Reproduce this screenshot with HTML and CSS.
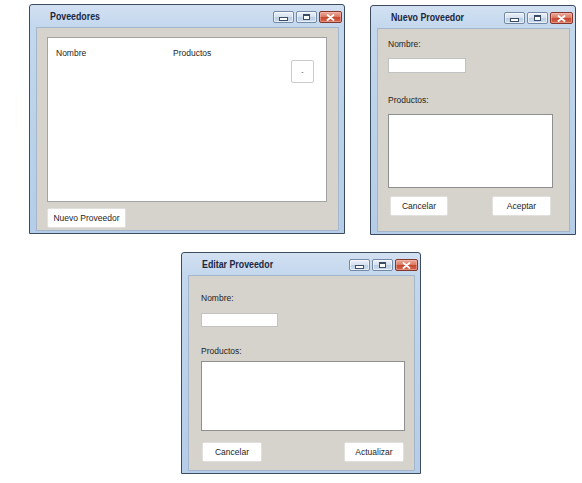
FILE: index.html
```html
<!DOCTYPE html>
<html lang="es">
<head>
<meta charset="utf-8">
<title>Proveedores</title>
<link rel="stylesheet" href="styles.css">
</head>
<body>
<div class="desk">

  <div class="win win-list">
    <div class="titlebar">
      <span class="title">Poveedores</span>
      <div class="tbtns">
        <span class="tb tb-min"><i class="ico-min"></i></span>
        <span class="tb tb-max"><i class="ico-max"></i></span>
        <span class="tb tb-close"><svg width="9" height="7" viewBox="0 0 9 7"><path d="M1.5 1 L7.5 6 M7.5 1 L1.5 6" stroke="#fff" stroke-width="1.8" stroke-linecap="round"/></svg></span>
      </div>
    </div>
    <div class="client client-list">
      <div class="panel">
        <div class="panel-head">
          <span class="col-name">Nombre</span>
          <span class="col-prod">Productos</span>
        </div>
        <div class="panel-row">
          <span class="btn btn-sq">-</span>
        </div>
      </div>
      <span class="btn btn-new">Nuevo Proveedor</span>
    </div>
  </div>

  <div class="win win-new">
    <div class="titlebar">
      <span class="title">Nuevo Proveedor</span>
      <div class="tbtns">
        <span class="tb tb-min"><i class="ico-min"></i></span>
        <span class="tb tb-max"><i class="ico-max"></i></span>
        <span class="tb tb-close"><svg width="9" height="7" viewBox="0 0 9 7"><path d="M1.5 1 L7.5 6 M7.5 1 L1.5 6" stroke="#fff" stroke-width="1.8" stroke-linecap="round"/></svg></span>
      </div>
    </div>
    <div class="client client-form client-new">
      <span class="label lbl-name">Nombre:</span>
      <span class="input"></span>
      <span class="label lbl-prod">Productos:</span>
      <span class="textarea"></span>
      <div class="actions">
        <span class="btn btn-act btn-cancel">Cancelar</span>
        <span class="btn btn-act btn-ok">Aceptar</span>
      </div>
    </div>
  </div>

  <div class="win win-edit">
    <div class="titlebar">
      <span class="title">Editar Proveedor</span>
      <div class="tbtns">
        <span class="tb tb-min"><i class="ico-min"></i></span>
        <span class="tb tb-max"><i class="ico-max"></i></span>
        <span class="tb tb-close"><svg width="9" height="7" viewBox="0 0 9 7"><path d="M1.5 1 L7.5 6 M7.5 1 L1.5 6" stroke="#fff" stroke-width="1.8" stroke-linecap="round"/></svg></span>
      </div>
    </div>
    <div class="client client-form client-edit">
      <span class="label lbl-name">Nombre:</span>
      <span class="input"></span>
      <span class="label lbl-prod">Productos:</span>
      <span class="textarea"></span>
      <div class="actions">
        <span class="btn btn-act btn-cancel">Cancelar</span>
        <span class="btn btn-act btn-ok">Actualizar</span>
      </div>
    </div>
  </div>

</div>
</body>
</html>
```

FILE: styles.css
```css
html, body {
  margin: 0;
  padding: 0;
  background: #ffffff;
}

.desk {
  position: relative;
  width: 582px;
  height: 483px;
  overflow: hidden;
  font-family: "Liberation Sans", Arial, sans-serif;
  font-size: 8.5px;
  color: #1e1e1e;
}

/* ---------- window frame ---------- */
.win {
  position: absolute;
  box-sizing: border-box;
  border: 1px solid #3c4b5e;
  border-radius: 3px 3px 0 0;
  background: linear-gradient(to bottom, #d2e1f2 0px, #c3d7ed 22px, #bad1ea 60%, #b5cde8 100%);
  display: flex;
  flex-direction: column;
  padding: 0 5px 2px 6px;
}

.win-list { left: 29px; top: 4px; width: 316px; height: 230px; }
.win-new  { left: 370px; top: 5px; width: 206px; height: 230px; }
.win-edit { left: 181px; top: 252px; width: 240px; height: 222px; }

.titlebar {
  height: 22px;
  flex: none;
  display: flex;
  align-items: flex-start;
  justify-content: space-between;
  margin-right: -3px;
}

.title {
  display: inline-block;
  font-family: "Liberation Sans", Arial, sans-serif;
  font-weight: bold;
  font-size: 10.5px;
  line-height: 12px;
  color: #1b2740;
  margin: 5px 0 0 14px;
  transform: scaleX(0.84);
  transform-origin: left center;
  white-space: nowrap;
}

.tbtns {
  display: flex;
  gap: 2px;
  margin-top: 6px;
}

.tb {
  box-sizing: border-box;
  width: 21px;
  height: 12px;
  border: 1px solid #7389a6;
  border-radius: 2px;
  display: flex;
  align-items: center;
  justify-content: center;
  background: linear-gradient(to bottom, #ebf1f8 0%, #d6e2ef 48%, #bccee3 52%, #cddcee 100%);
  box-shadow: inset 0 0 0 1px rgba(255,255,255,0.55);
}

.tb-close {
  width: 23px;
  border-color: #83372c;
  background: linear-gradient(to bottom, #eba897 0%, #dc7a64 48%, #c6472f 52%, #d4684f 100%);
  box-shadow: inset 0 0 0 1px rgba(255,200,190,0.45);
}

.ico-min {
  display: block;
  width: 7px;
  height: 2px;
  background: #ffffff;
  border: 1px solid #3b4d66;
  margin-top: 3px;
}

.ico-max {
  display: block;
  width: 5px;
  height: 3px;
  background: #ffffff;
  border: 1px solid #3b4d66;
  border-top-width: 2px;
}

.client {
  flex: 1;
  box-sizing: border-box;
  border: 1px solid #a4b6cc;
  background: #d6d3cc;
  display: flex;
  flex-direction: column;
  align-items: flex-start;
}

/* ---------- list window ---------- */
.client-list {
  padding: 9px 11px 0 10px;
}

.panel {
  box-sizing: border-box;
  width: 280px;
  height: 165px;
  background: #ffffff;
  border: 1px solid #a3a3a3;
  padding: 9px 12px 0 8px;
  display: flex;
  flex-direction: column;
}

.panel-head {
  display: flex;
  line-height: 13px;
}

.col-name { width: 117px; }

.panel-row {
  display: flex;
  justify-content: flex-end;
}

.btn {
  box-sizing: border-box;
  background: #ffffff;
  border: 1px solid #e2e0dc;
  border-radius: 2px;
  display: flex;
  align-items: center;
  justify-content: center;
  color: #1e1e1e;
  white-space: nowrap;
}

.btn-sq {
  width: 23px;
  height: 23px;
  border-color: #cbcbcb;
  font-size: 7px;
  color: #444;
}

.btn-new {
  margin-top: 6px;
  width: 79px;
  height: 20px;
}

/* ---------- form windows ---------- */
.label {
  line-height: 12px;
  display: block;
}

.input {
  display: block;
  box-sizing: border-box;
  background: #ffffff;
  border: 1px solid #c2c2c2;
}

.textarea {
  display: block;
  box-sizing: border-box;
  background: #ffffff;
  border: 1px solid #8f8f8f;
}

.actions {
  display: flex;
  justify-content: space-between;
  box-sizing: border-box;
}

.btn-act {
  height: 20px;
}

/* new */
.client-new { padding: 9px 0 0 10px; }
.client-new .input { width: 78px; height: 15px; margin-top: 8px; }
.client-new .lbl-prod { margin-top: 21px; }
.client-new .textarea { width: 165px; height: 74px; margin-top: 8px; }
.client-new .actions { width: 165px; margin-top: 8px; padding: 0 2px; }
.client-new .btn-cancel { width: 58px; }
.client-new .btn-ok { width: 59px; }

/* edit */
.client-edit { padding: 16px 0 0 12px; }
.client-edit .input { width: 77px; height: 14px; margin-top: 9px; }
.client-edit .lbl-prod { margin-top: 18px; }
.client-edit .textarea { width: 204px; height: 70px; margin-top: 4px; }
.client-edit .actions { width: 204px; margin-top: 11px; padding: 0 1px; }
.client-edit .btn-cancel { width: 60px; }
.client-edit .btn-ok { width: 60px; }
```
